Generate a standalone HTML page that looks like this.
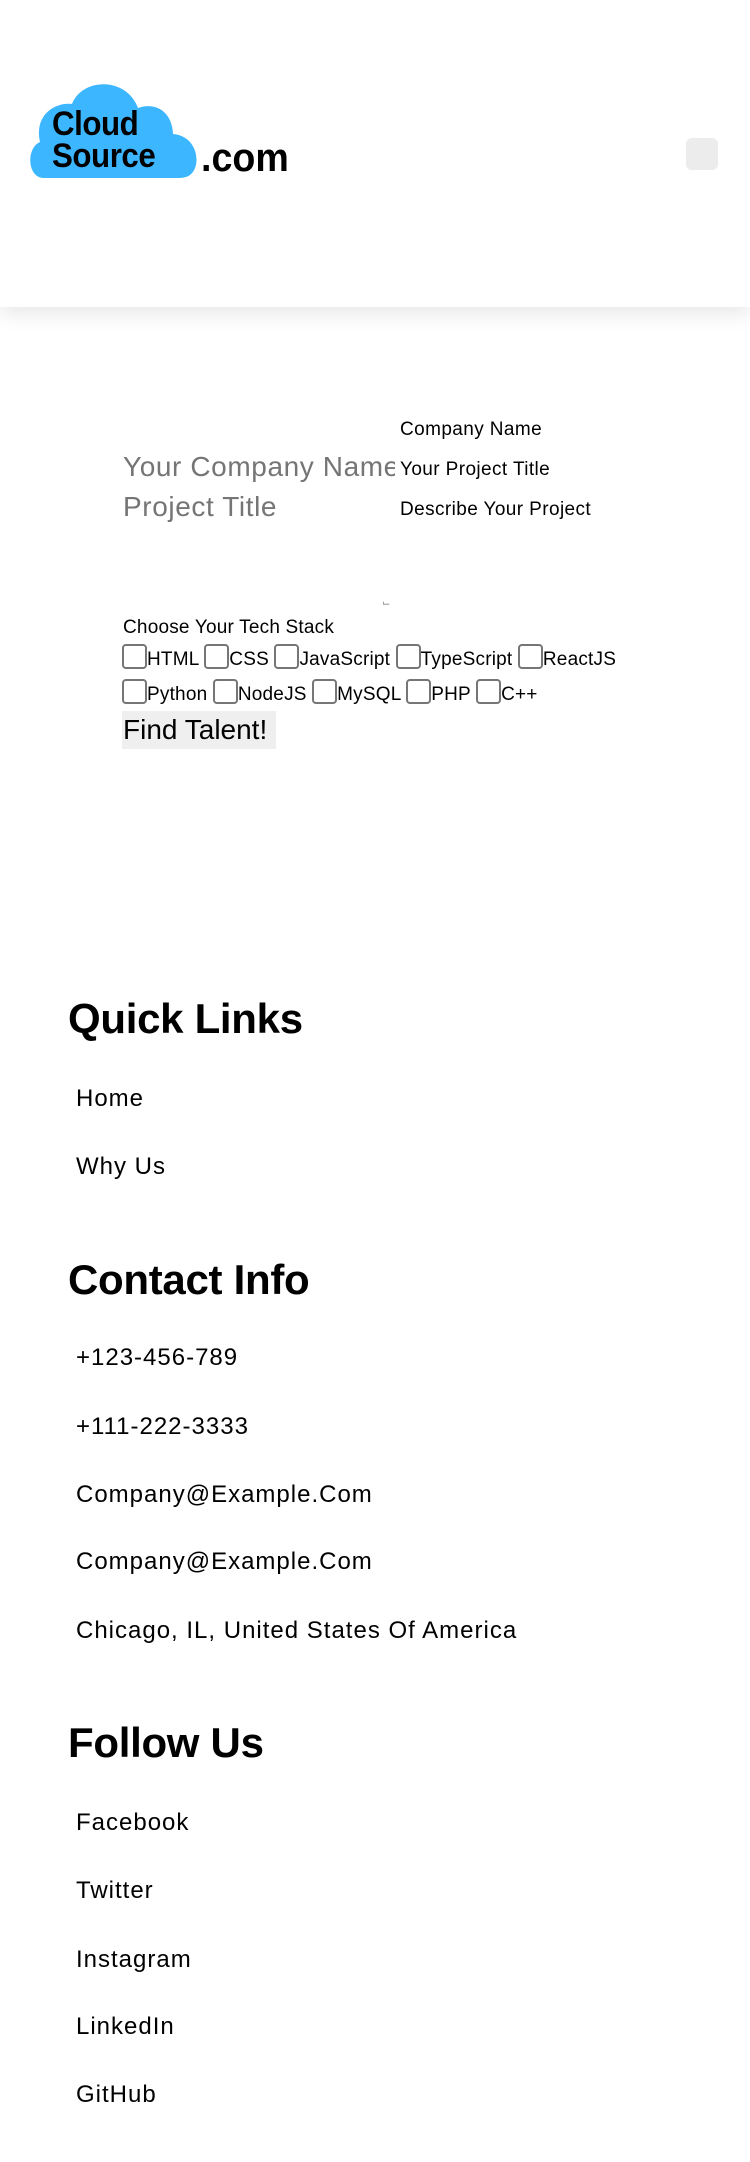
<!DOCTYPE html>
<html><head><meta charset="utf-8">
<style>
*{margin:0;padding:0;box-sizing:border-box}
body{width:750px;height:2162px;background:#fff;font-family:"Liberation Sans",sans-serif;color:#000;position:relative;overflow:hidden}
.a{position:absolute;white-space:nowrap}
header{position:absolute;left:0;top:0;width:750px;height:307px;background:#fff;box-shadow:0 6px 20px rgba(0,0,0,0.10)}
.cb{display:inline-block;width:25px;height:25px;border:2px solid #767676;border-radius:4px;vertical-align:-4px;background:#fff}
.row{font-size:19px;line-height:30px;letter-spacing:0.2px}
.h{font-weight:bold;font-size:42px;line-height:50px;letter-spacing:-0.3px}
.l{font-size:24px;line-height:30px;left:76px;letter-spacing:1px}
.lb{font-size:19px;line-height:24px;letter-spacing:0.4px}
</style></head><body>
<header>
<svg class="a" style="left:30px;top:82px" width="175" height="96" viewBox="0 0 175 96">
<path d="M14 96 C-3 96 -4 66 10 60 C4 34 24 20 42 22 C52 -4 96 -6 108 26 C124 20 142 28 143 52 C168 54 172 84 160 93 C156 96 150 96 146 96 Z" fill="#3bb6ff"/>
</svg>
<div class="a" style="left:52px;top:108px;font-size:34px;line-height:32px;font-weight:bold;letter-spacing:-0.5px;transform:scaleX(0.92);transform-origin:left">Cloud<br>Source</div>
<div class="a" style="left:201px;top:136px;font-size:40px;line-height:44px;font-weight:bold;transform:scaleX(0.94);transform-origin:left">.com</div>
<div class="a" style="left:686px;top:138px;width:32px;height:32px;background:#ececec;border-radius:6px"></div>
</header>

<div class="a lb" style="left:400px;top:418px">Company Name</div>
<div class="a" style="left:123px;top:451px;font-size:28px;line-height:32px;color:#757575;width:272px;overflow:hidden;letter-spacing:0.6px">Your Company Name</div>
<div class="a lb" style="left:400px;top:458px">Your Project Title</div>
<div class="a" style="left:123px;top:491px;font-size:28px;line-height:32px;color:#757575;letter-spacing:0.6px">Project Title</div>
<div class="a lb" style="left:400px;top:498px">Describe Your Project</div>
<div class="a" style="left:382px;top:598px;font-size:10px;color:#888">&#8985;</div>
<div class="a row" style="left:123px;top:613px">Choose Your Tech Stack</div>
<div class="a row" style="left:122px;top:644px"><span class="cb"></span>HTML <span class="cb"></span>CSS <span class="cb"></span>JavaScript <span class="cb"></span>TypeScript <span class="cb"></span>ReactJS</div>
<div class="a row" style="left:122px;top:679px"><span class="cb"></span>Python <span class="cb"></span>NodeJS <span class="cb"></span>MySQL <span class="cb"></span>PHP <span class="cb"></span>C++</div>
<div class="a" style="left:122px;top:711px;width:154px;height:38px;background:#efefef;font-size:28px;line-height:38px;padding-left:1px">Find Talent!</div>

<div class="a h" style="left:68px;top:994px">Quick Links</div>
<div class="a l" style="top:1084px">Home</div>
<div class="a l" style="top:1152px">Why Us</div>

<div class="a h" style="left:68px;top:1255px">Contact Info</div>
<div class="a l" style="top:1343px">+123-456-789</div>
<div class="a l" style="top:1412px">+111-222-3333</div>
<div class="a l" style="top:1480px">Company@Example.Com</div>
<div class="a l" style="top:1547px">Company@Example.Com</div>
<div class="a l" style="top:1616px">Chicago, IL, United States Of America</div>

<div class="a h" style="left:68px;top:1718px">Follow Us</div>
<div class="a l" style="top:1808px">Facebook</div>
<div class="a l" style="top:1876px">Twitter</div>
<div class="a l" style="top:1945px">Instagram</div>
<div class="a l" style="top:2012px">LinkedIn</div>
<div class="a l" style="top:2080px">GitHub</div>
</body></html>
